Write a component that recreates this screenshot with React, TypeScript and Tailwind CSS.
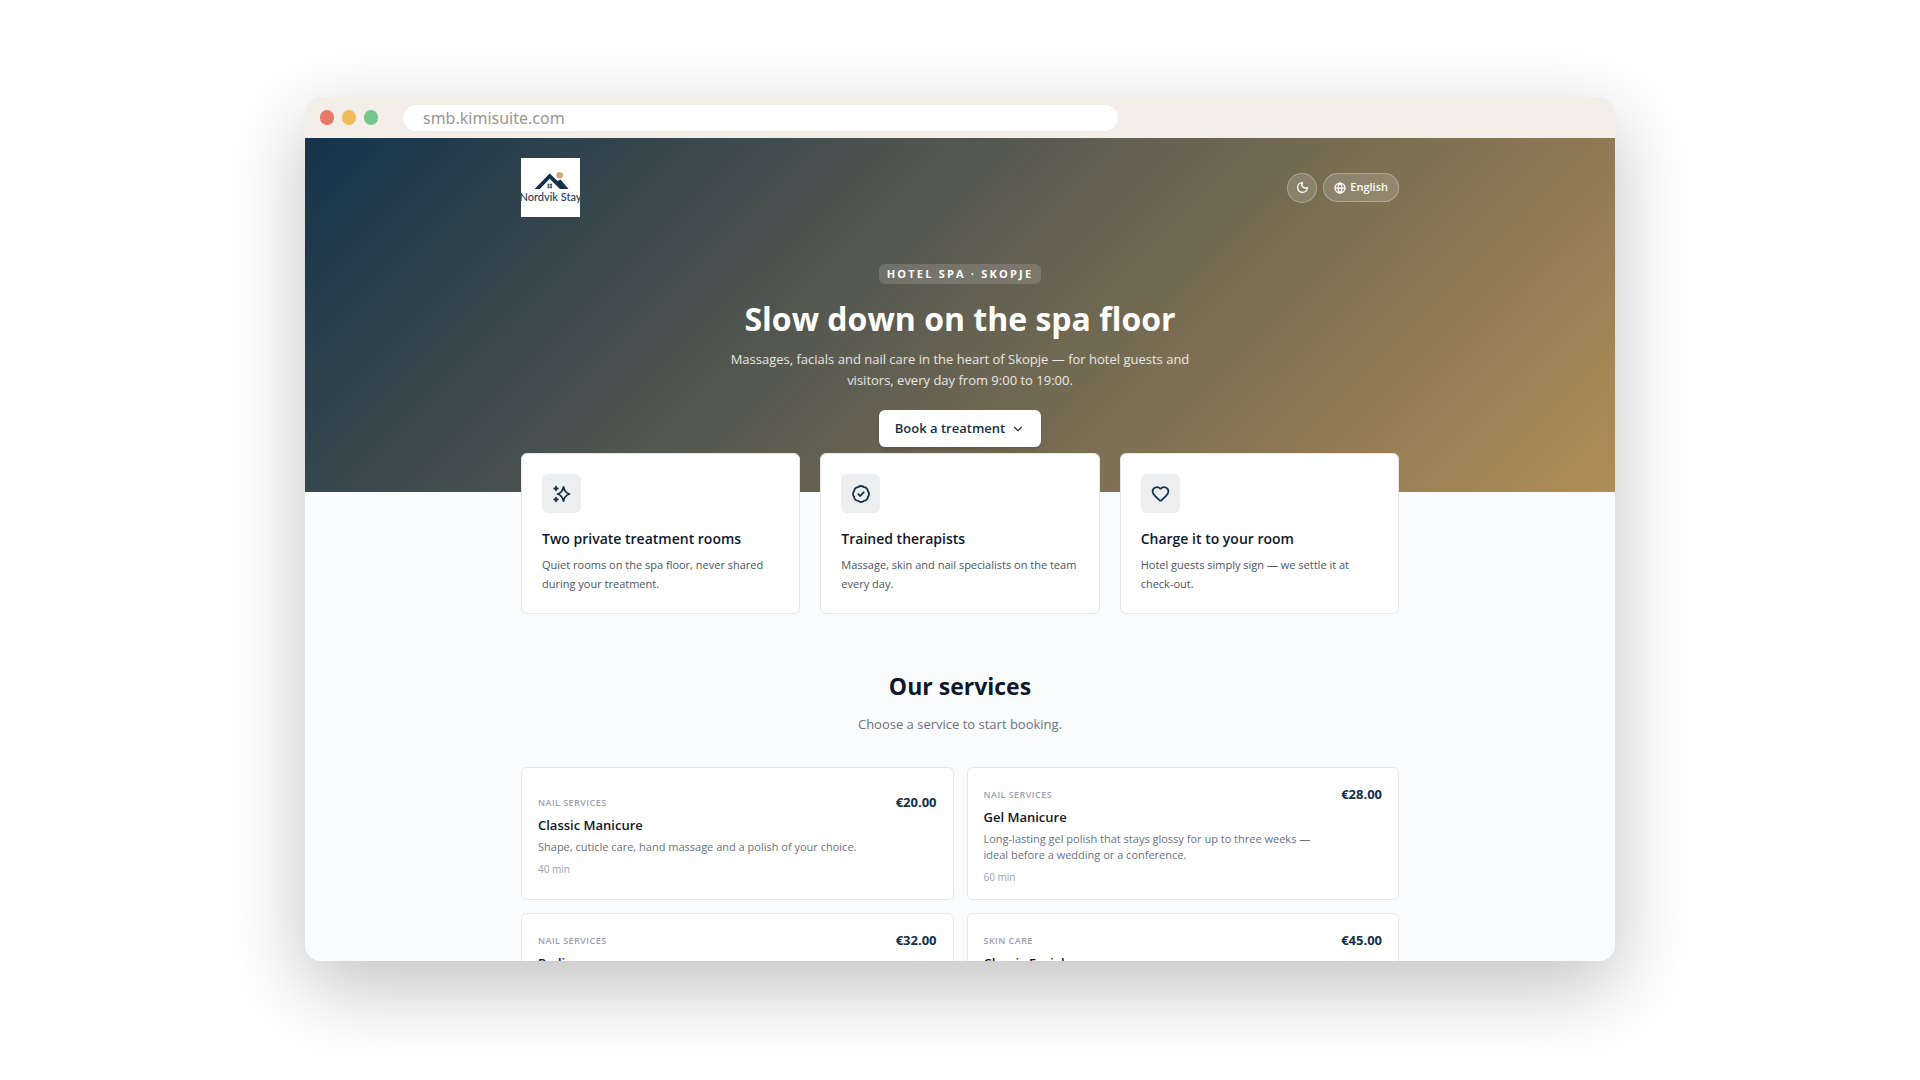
import React from 'react';
import { ChevronDown, Globe, Heart, Moon } from 'lucide-react';

function SparkleIcon() {
  return (
    <svg width="20" height="20" viewBox="0 0 20 20" fill="none" stroke="currentColor" strokeWidth="1.8" strokeLinecap="round" strokeLinejoin="round">
      <path d="M11.500 2.800c.8 4.100 2.300 6.200 6 7.200-3.700 1-5.200 3.100-6 7.200-.8-4.100-2.300-6.200-6-7.200 3.700-1 5.200-3.100 6-7.200z" />
      <path d="M4 2.700v3.600M2.200 4.500h3.600M4 13.700v3.600M2.200 15.500h3.600" />
    </svg>
  );
}

function CheckBadgeIcon() {
  return (
    <svg width="20" height="20" viewBox="0 0 20 20" fill="none" stroke="currentColor" strokeWidth="1.8" strokeLinecap="round" strokeLinejoin="round">
      <path d="M7.170 3.160a4 4 0 0 1 5.660 0 4 4 0 0 1 4.010 4.010 4 4 0 0 1 0 5.660 4 4 0 0 1-4.010 4.010 4 4 0 0 1-5.660 0 4 4 0 0 1-4.010-4.010 4 4 0 0 1 0-5.660 4 4 0 0 1 4.010-4.010z" />
      <path d="m7.300 10.200 1.900 1.800 3.500-3.700" />
    </svg>
  );
}

function HeartIcon() {
  return <Heart size={19} strokeWidth={2.2} />;
}

const features = [
  { title: 'Two private treatment rooms', text: 'Quiet rooms on the spa floor, never shared during your treatment.', icon: SparkleIcon },
  { title: 'Trained therapists', text: 'Massage, skin and nail specialists on the team every day.', icon: CheckBadgeIcon },
  { title: 'Charge it to your room', text: 'Hotel guests simply sign — we settle it at check-out.', icon: HeartIcon },
];

const services = [
  { category: 'Nail services', name: 'Classic Manicure', text: 'Shape, cuticle care, hand massage and a polish of your choice.', time: '40 min', price: '€20.00' },
  { category: 'Nail services', name: 'Gel Manicure', text: 'Long-lasting gel polish that stays glossy for up to three weeks — ideal before a wedding or a conference.', time: '60 min', price: '€28.00' },
  { category: 'Nail services', name: 'Pedicure', text: 'Foot soak, exfoliation, nail shaping and a polish of your choice, finished with a short massage.', time: '60 min', price: '€32.00' },
  { category: 'Skin care', name: 'Classic Facial', text: 'Deep cleansing, gentle exfoliation and a hydrating mask, finished with a light face massage.', time: '60 min', price: '€45.00' },
];

function Logo() {
  return (
    <svg width="59" height="59" viewBox="0 0 59 59" role="img" aria-label="Nordvik Stay" className="bg-white">
      <circle cx="38.700" cy="17.200" r="3.300" fill="#cdac7c" />
      <path d="M13.500 31 28.700 15.500l7.800 7.500 3-1.500L47.500 31H39L28.700 20.800 18.800 31z" fill="#12304a" />
      <path d="M26.500 25.800h2v1.900h-2zM29.100 25.800h2v1.900h-2zM26.500 28.300h2v1.900h-2zM29.100 28.300h2v1.900h-2z" fill="#3a5266" />
      <text x="29.500" y="42.500" textAnchor="middle" fontSize="11" fontWeight="500" fill="#1f3a52" className="font-['Lato']">Nordvik Stay</text>
    </svg>
  );
}

export default function App() {
  return (
    <div className="min-h-screen bg-white pt-[97px] px-6 font-['Open_Sans','Noto_Sans',sans-serif]">
      <div className="mx-auto flex h-[80vh] w-full max-w-[1310px] flex-col overflow-hidden rounded-2xl bg-[#fafbfd] shadow-[0_25px_80px_rgba(0,0,0,0.25)]">
        <div className="flex h-[41px] shrink-0 items-center bg-[#f3eee7] pl-[15px]">
          <div className="flex gap-2">
            <span className="h-[15px] w-[14px] rounded-full bg-[#e8786a]" />
            <span className="h-[15px] w-[14px] rounded-full bg-[#efbd57]" />
            <span className="h-[15px] w-[14px] rounded-full bg-[#76c68a]" />
          </div>
          <div className="ml-[25px] flex h-[26px] w-[715px] items-center rounded-full bg-white px-5 font-['Noto_Sans',sans-serif] text-[16px] text-[#9b9690]">smb.kimisuite.com</div>
        </div>

        <header className="shrink-0 bg-[linear-gradient(135deg,#15334b,#b08d57)] pt-5 pb-[45px]">
          <div className="mx-auto flex w-full max-w-[878px] items-center justify-between">
            <Logo />
            <div className="flex items-center gap-[6px] text-white">
              <button aria-label="Dark mode" className="flex size-[30px] items-center justify-center rounded-full border border-white/30 bg-white/15">
                <Moon size={13} strokeWidth={2.5} />
              </button>
              <button className="flex h-[29px] items-center gap-1 rounded-full border border-white/30 bg-white/15 px-[10px] text-[11px] font-semibold">
                <Globe size={12} strokeWidth={2.5} />
                <span>English</span>
              </button>
            </div>
          </div>

          <div className="mx-auto mt-[47px] flex max-w-[470px] flex-col items-center text-center text-white">
            <span className="rounded-md bg-white/15 px-2 text-[11px] leading-[20px] font-bold tracking-[0.2em] uppercase">Hotel spa · Skopje</span>
            <h1 className="mt-[14px] text-[32px] leading-[42px] font-bold whitespace-nowrap">Slow down on the spa floor</h1>
            <p className="mt-[9px] text-[13px] leading-[21px] text-white/85">Massages, facials and nail care in the heart of Skopje — for hotel guests and visitors, every day from 9:00 to 19:00.</p>
            <button className="mt-[19px] flex h-[37px] items-center gap-[6px] rounded-md bg-white px-4 text-[13px] font-semibold text-[#15334b] shadow-md">
              Book a treatment
              <ChevronDown size={14} />
            </button>
          </div>
        </header>

        <main className="mx-auto w-full max-w-[878px]">
          <section className="relative -mt-[39px] grid grid-cols-3 gap-5">
            {features.map((item) => {
              const Icon = item.icon;
              return (
                <article key={item.title} className="rounded-md border border-gray-200 bg-white p-5">
                  <div className="flex size-[39px] items-center justify-center rounded-md bg-[#eceeef] text-[#12304a]">
                    <Icon />
                  </div>
                  <h3 className="mt-4 text-[14px] leading-[20px] font-semibold text-[#0f172a]">{item.title}</h3>
                  <p className="mt-[6px] text-[11px] leading-[19px] text-gray-600">{item.text}</p>
                </article>
              );
            })}
          </section>

          <section className="mt-14">
            <div className="text-center">
              <h2 className="text-[23px] leading-[32px] font-bold text-[#0f172a]">Our services</h2>
              <p className="mt-3 text-[13px] leading-[20px] text-gray-500">Choose a service to start booking.</p>
            </div>
            <div className="mt-[33px] grid grid-cols-2 gap-[13px]">
              {services.map((item) => (
                <button key={item.name} className="flex min-h-[133px] items-center rounded-md border border-gray-200 bg-white px-4 pt-[5px] text-left">
                  <span className="flex w-full items-start justify-between gap-4">
                    <span className="flex w-[340px] flex-col">
                      <span className="text-[9px] leading-[16px] font-semibold tracking-[0.05em] text-gray-400 uppercase">{item.category}</span>
                      <span className="mt-1 text-[13px] leading-[20px] font-semibold text-[#0f172a]">{item.name}</span>
                      <span className="mt-1 text-[11px] leading-[16px] text-gray-500">{item.text}</span>
                      <span className="mt-[6px] text-[10px] leading-[16px] text-gray-400">{item.time}</span>
                    </span>
                    <span className="text-[13px] leading-[15px] font-bold text-[#12304a]">{item.price}</span>
                  </span>
                </button>
              ))}
            </div>
          </section>
        </main>
      </div>
    </div>
  );
}
